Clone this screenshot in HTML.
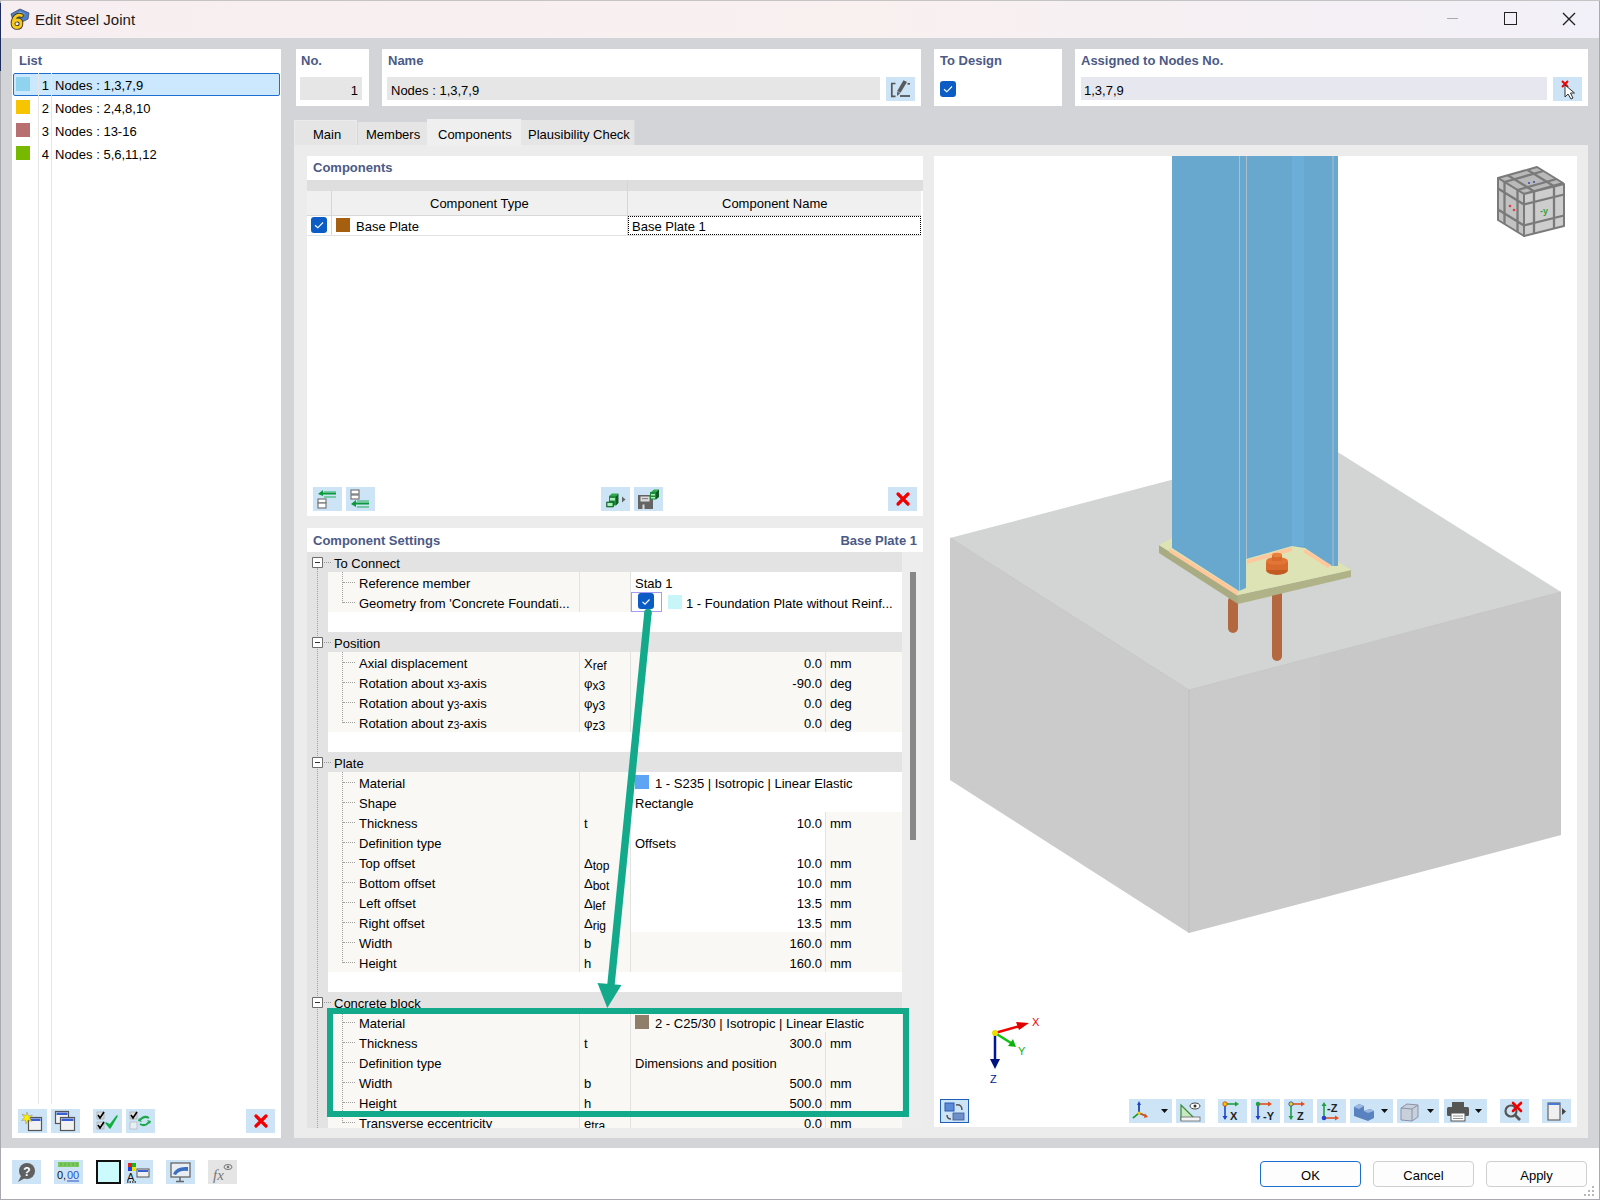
<!DOCTYPE html><html><head><meta charset="utf-8"><style>
html,body{margin:0;padding:0;width:1600px;height:1200px;overflow:hidden;background:#d3d4d8;}
body{position:relative;font-family:"Liberation Sans",sans-serif;font-size:13px;color:#000;}
div{box-sizing:border-box;}
.t{position:absolute;white-space:nowrap;margin-top:1px;}
.lbl{color:#4b5a86;font-weight:bold;}
.ib{position:absolute;background:#cde4f7;}
</style></head><body>
<div style="position:absolute;left:0px;top:0px;width:1600px;height:38px;background:linear-gradient(90deg,#f7eef1,#f9f0f0 55%,#f2f0f8);"></div>
<div class="t" style="left:35px;top:9px;height:20px;line-height:20px;font-size:15px;color:#1a1a1a;">Edit Steel Joint</div>
<div style="position:absolute;left:0px;top:1148px;width:1600px;height:52px;background:#fff;"></div>
<div style="position:absolute;left:12px;top:49px;width:269px;height:1089px;background:#fff;"></div>
<div class="t lbl" style="left:19px;top:50px;height:20px;line-height:20px;font-size:13px;">List</div>
<div style="position:absolute;left:13px;top:73px;width:267px;height:23px;background:#cce8ff;border:1px solid #1f6fd0;border-radius:2px;"></div>
<div style="position:absolute;left:38px;top:73px;width:1px;height:1031px;background:#e6e6e6;"></div>
<div style="position:absolute;left:51px;top:73px;width:1px;height:1031px;background:#e6e6e6;"></div>
<div style="position:absolute;left:16px;top:77px;width:14px;height:14px;background:#8fd3ee;"></div>
<div class="t" style="right:1551px;top:74px;height:22px;line-height:22px;text-align:right;">1</div>
<div class="t" style="left:55px;top:74px;height:22px;line-height:22px;">Nodes : 1,3,7,9</div>
<div style="position:absolute;left:16px;top:100px;width:14px;height:14px;background:#f6c400;"></div>
<div class="t" style="right:1551px;top:97px;height:22px;line-height:22px;text-align:right;">2</div>
<div class="t" style="left:55px;top:97px;height:22px;line-height:22px;">Nodes : 2,4,8,10</div>
<div style="position:absolute;left:16px;top:123px;width:14px;height:14px;background:#b86f70;"></div>
<div class="t" style="right:1551px;top:120px;height:22px;line-height:22px;text-align:right;">3</div>
<div class="t" style="left:55px;top:120px;height:22px;line-height:22px;">Nodes : 13-16</div>
<div style="position:absolute;left:16px;top:146px;width:14px;height:14px;background:#76b900;"></div>
<div class="t" style="right:1551px;top:143px;height:22px;line-height:22px;text-align:right;">4</div>
<div class="t" style="left:55px;top:143px;height:22px;line-height:22px;">Nodes : 5,6,11,12</div>
<div style="position:absolute;left:296px;top:49px;width:73px;height:57px;background:#fff;"></div>
<div class="t lbl" style="left:301px;top:50px;height:20px;line-height:20px;">No.</div>
<div style="position:absolute;left:300px;top:77px;width:62px;height:23px;background:#e6e6e6;"></div>
<div class="t" style="right:1242px;top:79px;height:22px;line-height:22px;text-align:right;">1</div>
<div style="position:absolute;left:382px;top:49px;width:539px;height:57px;background:#fff;"></div>
<div class="t lbl" style="left:388px;top:50px;height:20px;line-height:20px;">Name</div>
<div style="position:absolute;left:387px;top:77px;width:493px;height:23px;background:#e6e6e6;"></div>
<div class="t" style="left:391px;top:79px;height:22px;line-height:22px;">Nodes : 1,3,7,9</div>
<div style="position:absolute;left:886px;top:77px;width:29px;height:24px;background:#cde4f7;"></div>
<div style="position:absolute;left:934px;top:49px;width:128px;height:57px;background:#fff;"></div>
<div class="t lbl" style="left:940px;top:50px;height:20px;line-height:20px;">To Design</div>
<div style="position:absolute;left:1075px;top:49px;width:513px;height:57px;background:#fff;"></div>
<div class="t lbl" style="left:1081px;top:50px;height:20px;line-height:20px;">Assigned to Nodes No.</div>
<div style="position:absolute;left:1081px;top:77px;width:466px;height:23px;background:#e6e7ef;"></div>
<div class="t" style="left:1084px;top:79px;height:22px;line-height:22px;">1,3,7,9</div>
<div style="position:absolute;left:1553px;top:77px;width:29px;height:24px;background:#cde4f7;"></div>
<div style="position:absolute;left:294px;top:145px;width:1294px;height:993px;background:#ececec;"></div>
<div style="position:absolute;left:294px;top:120px;width:63px;height:25px;background:#e5e5e5;border:1px solid #ebebeb;border-bottom:none;"></div>
<div style="position:absolute;left:357px;top:122px;width:1px;height:23px;background:#d6d6d6;"></div>
<div style="position:absolute;left:358px;top:122px;width:69px;height:23px;background:#e5e5e5;"></div>
<div style="position:absolute;left:427px;top:119px;width:94px;height:27px;background:#efefef;"></div>
<div style="position:absolute;left:521px;top:120px;width:114px;height:25px;background:#e5e5e5;"></div>
<div style="position:absolute;left:634px;top:120px;width:1px;height:25px;background:#dadada;"></div>
<div class="t" style="left:313px;top:123px;height:22px;line-height:22px;">Main</div>
<div class="t" style="left:366px;top:123px;height:22px;line-height:22px;">Members</div>
<div class="t" style="left:438px;top:123px;height:22px;line-height:22px;">Components</div>
<div class="t" style="left:528px;top:123px;height:22px;line-height:22px;">Plausibility Check</div>
<div style="position:absolute;left:307px;top:156px;width:616px;height:360px;background:#fff;"></div>
<div class="t lbl" style="left:313px;top:157px;height:20px;line-height:20px;">Components</div>
<div style="position:absolute;left:307px;top:180px;width:616px;height:11px;background:#dedede;"></div>
<div style="position:absolute;left:307px;top:191px;width:614px;height:24px;background:#f0f0f0;"></div>
<div style="position:absolute;left:331px;top:191px;width:1px;height:44px;background:#d6d6d6;"></div>
<div style="position:absolute;left:627px;top:180px;width:1px;height:55px;background:#d6d6d6;"></div>
<div class="t" style="left:430px;top:193px;height:20px;line-height:20px;">Component Type</div>
<div class="t" style="left:722px;top:193px;height:20px;line-height:20px;">Component Name</div>
<div style="position:absolute;left:307px;top:215px;width:614px;height:1px;background:#d9d9d9;"></div>
<div style="position:absolute;left:307px;top:235px;width:614px;height:1px;background:#e3e3e3;"></div>
<div class="t" style="left:356px;top:216px;height:20px;line-height:20px;">Base Plate</div>
<div style="position:absolute;left:336px;top:218px;width:14px;height:14px;background:#a65e0f;"></div>
<div style="position:absolute;left:628px;top:216px;width:293px;height:19px;border:1px dotted #000;"></div>
<div class="t" style="left:632px;top:216px;height:20px;line-height:20px;">Base Plate 1</div>
<div style="position:absolute;left:313px;top:487px;width:29px;height:24px;background:#cde4f7;"></div>
<div style="position:absolute;left:346px;top:487px;width:29px;height:24px;background:#cde4f7;"></div>
<div style="position:absolute;left:601px;top:487px;width:29px;height:24px;background:#cde4f7;"></div>
<div style="position:absolute;left:634px;top:487px;width:29px;height:24px;background:#cde4f7;"></div>
<div style="position:absolute;left:888px;top:487px;width:29px;height:24px;background:#cde4f7;"></div>
<div style="position:absolute;left:307px;top:528px;width:616px;height:600px;background:#fff;"></div>
<div class="t lbl" style="left:313px;top:530px;height:20px;line-height:20px;">Component Settings</div>
<div class="t lbl" style="right:683px;top:530px;height:20px;line-height:20px;">Base Plate 1</div>
<div style="position:absolute;left:307px;top:552px;width:595px;height:576px;overflow:hidden;">
<div style="position:absolute;left:0px;top:0px;width:21px;height:576px;background:#e3e3e3"></div>
<div style="position:absolute;left:0px;top:0px;width:595px;height:20px;background:#e3e3e3"></div>
<div style="position:absolute;left:5px;top:5px;width:11px;height:11px;border:1px solid #6d6d6d;background:#fff;border-radius:1px;"></div>
<div style="position:absolute;left:8px;top:10px;width:5px;height:1px;background:#333;"></div>
<div style="position:absolute;left:17px;top:10px;width:7px;height:1px;border-top:1px dotted #9a9a9a;"></div>
<div class="t" style="left:27px;top:1px;height:20px;line-height:20px;">To Connect</div>
<div style="position:absolute;left:21px;top:20px;width:574px;height:20px;background:#f9f8f4"></div>
<div style="position:absolute;left:324px;top:20px;width:271px;height:20px;background:#fff;"></div>
<div style="position:absolute;left:21px;top:40px;width:574px;height:20px;background:#f9f8f4"></div>
<div style="position:absolute;left:324px;top:40px;width:271px;height:20px;background:#fff;"></div>
<div style="position:absolute;left:35px;top:20px;width:1px;height:31px;border-left:1px dotted #a0a0a0;"></div>
<div style="position:absolute;left:272px;top:20px;width:1px;height:20px;background:#e2e2e0;"></div>
<div style="position:absolute;left:323px;top:20px;width:1px;height:20px;background:#e2e2e0;"></div>
<div style="position:absolute;left:36px;top:30px;width:12px;height:1px;border-top:1px dotted #a0a0a0;"></div>
<div class="t" style="left:52px;top:21px;height:20px;line-height:20px;">Reference member</div>
<div class="t" style="left:328px;top:21px;height:20px;line-height:20px;">Stab 1</div>
<div style="position:absolute;left:272px;top:40px;width:1px;height:20px;background:#e2e2e0;"></div>
<div style="position:absolute;left:323px;top:40px;width:1px;height:20px;background:#e2e2e0;"></div>
<div style="position:absolute;left:36px;top:50px;width:12px;height:1px;border-top:1px dotted #a0a0a0;"></div>
<div class="t" style="left:52px;top:41px;height:20px;line-height:20px;">Geometry from 'Concrete Foundati...</div>
<div style="position:absolute;left:324px;top:40px;width:31px;height:20px;border:1px solid #a49cf0;background:#fff;"></div>
<div style="position:absolute;left:331px;top:41px;width:16px;height:16px;background:#0b5cc4;border-radius:3px;"></div>
<svg style="position:absolute;left:334px;top:46px" width="10" height="8" viewBox="0 0 10 8"><path d="M1.5 3.8 L4 6.2 L8.5 1.5" stroke="#fff" stroke-width="1.15" fill="none"/></svg>
<div style="position:absolute;left:361px;top:43px;width:14px;height:14px;background:#c8f6f8;"></div>
<div class="t" style="left:379px;top:41px;height:20px;line-height:20px;">1 - Foundation Plate without Reinf...</div>
<div style="position:absolute;left:21px;top:60px;width:574px;height:20px;background:#fff;"></div>
<div style="position:absolute;left:0px;top:80px;width:595px;height:20px;background:#e3e3e3"></div>
<div style="position:absolute;left:5px;top:85px;width:11px;height:11px;border:1px solid #6d6d6d;background:#fff;border-radius:1px;"></div>
<div style="position:absolute;left:8px;top:90px;width:5px;height:1px;background:#333;"></div>
<div style="position:absolute;left:17px;top:90px;width:7px;height:1px;border-top:1px dotted #9a9a9a;"></div>
<div class="t" style="left:27px;top:81px;height:20px;line-height:20px;">Position</div>
<div style="position:absolute;left:21px;top:100px;width:574px;height:20px;background:#f9f8f4"></div>
<div style="position:absolute;left:21px;top:120px;width:574px;height:20px;background:#f9f8f4"></div>
<div style="position:absolute;left:21px;top:140px;width:574px;height:20px;background:#f9f8f4"></div>
<div style="position:absolute;left:21px;top:160px;width:574px;height:20px;background:#f9f8f4"></div>
<div style="position:absolute;left:35px;top:100px;width:1px;height:71px;border-left:1px dotted #a0a0a0;"></div>
<div style="position:absolute;left:272px;top:100px;width:1px;height:20px;background:#e2e2e0;"></div>
<div style="position:absolute;left:323px;top:100px;width:1px;height:20px;background:#e2e2e0;"></div>
<div style="position:absolute;left:518px;top:100px;width:1px;height:20px;background:#e2e2e0;"></div>
<div style="position:absolute;left:36px;top:110px;width:12px;height:1px;border-top:1px dotted #a0a0a0;"></div>
<div class="t" style="left:52px;top:101px;height:20px;line-height:20px;">Axial displacement</div>
<div class="t" style="left:277px;top:101px;height:20px;line-height:20px;">X<span style="font-size:12px;position:relative;top:2px;">ref</span></div>
<div class="t" style="right:80px;top:101px;height:20px;line-height:20px;text-align:right;">0.0</div>
<div class="t" style="left:523px;top:101px;height:20px;line-height:20px;">mm</div>
<div style="position:absolute;left:272px;top:120px;width:1px;height:20px;background:#e2e2e0;"></div>
<div style="position:absolute;left:323px;top:120px;width:1px;height:20px;background:#e2e2e0;"></div>
<div style="position:absolute;left:518px;top:120px;width:1px;height:20px;background:#e2e2e0;"></div>
<div style="position:absolute;left:36px;top:130px;width:12px;height:1px;border-top:1px dotted #a0a0a0;"></div>
<div class="t" style="left:52px;top:121px;height:20px;line-height:20px;">Rotation about x<span style="font-size:10px;position:relative;top:1px;">3</span>-axis</div>
<div class="t" style="left:277px;top:121px;height:20px;line-height:20px;">φ<span style="font-size:12px;position:relative;top:2px;">x3</span></div>
<div class="t" style="right:80px;top:121px;height:20px;line-height:20px;text-align:right;">-90.0</div>
<div class="t" style="left:523px;top:121px;height:20px;line-height:20px;">deg</div>
<div style="position:absolute;left:272px;top:140px;width:1px;height:20px;background:#e2e2e0;"></div>
<div style="position:absolute;left:323px;top:140px;width:1px;height:20px;background:#e2e2e0;"></div>
<div style="position:absolute;left:518px;top:140px;width:1px;height:20px;background:#e2e2e0;"></div>
<div style="position:absolute;left:36px;top:150px;width:12px;height:1px;border-top:1px dotted #a0a0a0;"></div>
<div class="t" style="left:52px;top:141px;height:20px;line-height:20px;">Rotation about y<span style="font-size:10px;position:relative;top:1px;">3</span>-axis</div>
<div class="t" style="left:277px;top:141px;height:20px;line-height:20px;">φ<span style="font-size:12px;position:relative;top:2px;">y3</span></div>
<div class="t" style="right:80px;top:141px;height:20px;line-height:20px;text-align:right;">0.0</div>
<div class="t" style="left:523px;top:141px;height:20px;line-height:20px;">deg</div>
<div style="position:absolute;left:272px;top:160px;width:1px;height:20px;background:#e2e2e0;"></div>
<div style="position:absolute;left:323px;top:160px;width:1px;height:20px;background:#e2e2e0;"></div>
<div style="position:absolute;left:518px;top:160px;width:1px;height:20px;background:#e2e2e0;"></div>
<div style="position:absolute;left:36px;top:170px;width:12px;height:1px;border-top:1px dotted #a0a0a0;"></div>
<div class="t" style="left:52px;top:161px;height:20px;line-height:20px;">Rotation about z<span style="font-size:10px;position:relative;top:1px;">3</span>-axis</div>
<div class="t" style="left:277px;top:161px;height:20px;line-height:20px;">φ<span style="font-size:12px;position:relative;top:2px;">z3</span></div>
<div class="t" style="right:80px;top:161px;height:20px;line-height:20px;text-align:right;">0.0</div>
<div class="t" style="left:523px;top:161px;height:20px;line-height:20px;">deg</div>
<div style="position:absolute;left:21px;top:180px;width:574px;height:20px;background:#fff;"></div>
<div style="position:absolute;left:0px;top:200px;width:595px;height:20px;background:#e3e3e3"></div>
<div style="position:absolute;left:5px;top:205px;width:11px;height:11px;border:1px solid #6d6d6d;background:#fff;border-radius:1px;"></div>
<div style="position:absolute;left:8px;top:210px;width:5px;height:1px;background:#333;"></div>
<div style="position:absolute;left:17px;top:210px;width:7px;height:1px;border-top:1px dotted #9a9a9a;"></div>
<div class="t" style="left:27px;top:201px;height:20px;line-height:20px;">Plate</div>
<div style="position:absolute;left:21px;top:220px;width:574px;height:20px;background:#f9f8f4"></div>
<div style="position:absolute;left:324px;top:220px;width:271px;height:20px;background:#fff;"></div>
<div style="position:absolute;left:21px;top:240px;width:574px;height:20px;background:#f9f8f4"></div>
<div style="position:absolute;left:324px;top:240px;width:271px;height:20px;background:#fff;"></div>
<div style="position:absolute;left:21px;top:260px;width:574px;height:20px;background:#f9f8f4"></div>
<div style="position:absolute;left:324px;top:260px;width:195px;height:20px;background:#fff;"></div>
<div style="position:absolute;left:21px;top:280px;width:574px;height:20px;background:#f9f8f4"></div>
<div style="position:absolute;left:324px;top:280px;width:195px;height:20px;background:#fff;"></div>
<div style="position:absolute;left:21px;top:300px;width:574px;height:20px;background:#f9f8f4"></div>
<div style="position:absolute;left:324px;top:300px;width:195px;height:20px;background:#fff;"></div>
<div style="position:absolute;left:21px;top:320px;width:574px;height:20px;background:#f9f8f4"></div>
<div style="position:absolute;left:324px;top:320px;width:195px;height:20px;background:#fff;"></div>
<div style="position:absolute;left:21px;top:340px;width:574px;height:20px;background:#f9f8f4"></div>
<div style="position:absolute;left:324px;top:340px;width:195px;height:20px;background:#fff;"></div>
<div style="position:absolute;left:21px;top:360px;width:574px;height:20px;background:#f9f8f4"></div>
<div style="position:absolute;left:324px;top:360px;width:195px;height:20px;background:#fff;"></div>
<div style="position:absolute;left:21px;top:380px;width:574px;height:20px;background:#f9f8f4"></div>
<div style="position:absolute;left:21px;top:400px;width:574px;height:20px;background:#f9f8f4"></div>
<div style="position:absolute;left:35px;top:220px;width:1px;height:191px;border-left:1px dotted #a0a0a0;"></div>
<div style="position:absolute;left:272px;top:220px;width:1px;height:20px;background:#e2e2e0;"></div>
<div style="position:absolute;left:323px;top:220px;width:1px;height:20px;background:#e2e2e0;"></div>
<div style="position:absolute;left:36px;top:230px;width:12px;height:1px;border-top:1px dotted #a0a0a0;"></div>
<div class="t" style="left:52px;top:221px;height:20px;line-height:20px;">Material</div>
<div style="position:absolute;left:328px;top:223px;width:14px;height:14px;background:#5ea4f5;"></div>
<div class="t" style="left:348px;top:221px;height:20px;line-height:20px;">1 - S235 | Isotropic | Linear Elastic</div>
<div style="position:absolute;left:272px;top:240px;width:1px;height:20px;background:#e2e2e0;"></div>
<div style="position:absolute;left:323px;top:240px;width:1px;height:20px;background:#e2e2e0;"></div>
<div style="position:absolute;left:36px;top:250px;width:12px;height:1px;border-top:1px dotted #a0a0a0;"></div>
<div class="t" style="left:52px;top:241px;height:20px;line-height:20px;">Shape</div>
<div class="t" style="left:328px;top:241px;height:20px;line-height:20px;">Rectangle</div>
<div style="position:absolute;left:272px;top:260px;width:1px;height:20px;background:#e2e2e0;"></div>
<div style="position:absolute;left:323px;top:260px;width:1px;height:20px;background:#e2e2e0;"></div>
<div style="position:absolute;left:518px;top:260px;width:1px;height:20px;background:#e2e2e0;"></div>
<div style="position:absolute;left:36px;top:270px;width:12px;height:1px;border-top:1px dotted #a0a0a0;"></div>
<div class="t" style="left:52px;top:261px;height:20px;line-height:20px;">Thickness</div>
<div class="t" style="left:277px;top:261px;height:20px;line-height:20px;">t</div>
<div class="t" style="right:80px;top:261px;height:20px;line-height:20px;text-align:right;">10.0</div>
<div class="t" style="left:523px;top:261px;height:20px;line-height:20px;">mm</div>
<div style="position:absolute;left:272px;top:280px;width:1px;height:20px;background:#e2e2e0;"></div>
<div style="position:absolute;left:323px;top:280px;width:1px;height:20px;background:#e2e2e0;"></div>
<div style="position:absolute;left:518px;top:280px;width:1px;height:20px;background:#e2e2e0;"></div>
<div style="position:absolute;left:36px;top:290px;width:12px;height:1px;border-top:1px dotted #a0a0a0;"></div>
<div class="t" style="left:52px;top:281px;height:20px;line-height:20px;">Definition type</div>
<div class="t" style="left:328px;top:281px;height:20px;line-height:20px;">Offsets</div>
<div style="position:absolute;left:272px;top:300px;width:1px;height:20px;background:#e2e2e0;"></div>
<div style="position:absolute;left:323px;top:300px;width:1px;height:20px;background:#e2e2e0;"></div>
<div style="position:absolute;left:518px;top:300px;width:1px;height:20px;background:#e2e2e0;"></div>
<div style="position:absolute;left:36px;top:310px;width:12px;height:1px;border-top:1px dotted #a0a0a0;"></div>
<div class="t" style="left:52px;top:301px;height:20px;line-height:20px;">Top offset</div>
<div class="t" style="left:277px;top:301px;height:20px;line-height:20px;">Δ<span style="font-size:12px;position:relative;top:2px;">top</span></div>
<div class="t" style="right:80px;top:301px;height:20px;line-height:20px;text-align:right;">10.0</div>
<div class="t" style="left:523px;top:301px;height:20px;line-height:20px;">mm</div>
<div style="position:absolute;left:272px;top:320px;width:1px;height:20px;background:#e2e2e0;"></div>
<div style="position:absolute;left:323px;top:320px;width:1px;height:20px;background:#e2e2e0;"></div>
<div style="position:absolute;left:518px;top:320px;width:1px;height:20px;background:#e2e2e0;"></div>
<div style="position:absolute;left:36px;top:330px;width:12px;height:1px;border-top:1px dotted #a0a0a0;"></div>
<div class="t" style="left:52px;top:321px;height:20px;line-height:20px;">Bottom offset</div>
<div class="t" style="left:277px;top:321px;height:20px;line-height:20px;">Δ<span style="font-size:12px;position:relative;top:2px;">bot</span></div>
<div class="t" style="right:80px;top:321px;height:20px;line-height:20px;text-align:right;">10.0</div>
<div class="t" style="left:523px;top:321px;height:20px;line-height:20px;">mm</div>
<div style="position:absolute;left:272px;top:340px;width:1px;height:20px;background:#e2e2e0;"></div>
<div style="position:absolute;left:323px;top:340px;width:1px;height:20px;background:#e2e2e0;"></div>
<div style="position:absolute;left:518px;top:340px;width:1px;height:20px;background:#e2e2e0;"></div>
<div style="position:absolute;left:36px;top:350px;width:12px;height:1px;border-top:1px dotted #a0a0a0;"></div>
<div class="t" style="left:52px;top:341px;height:20px;line-height:20px;">Left offset</div>
<div class="t" style="left:277px;top:341px;height:20px;line-height:20px;">Δ<span style="font-size:12px;position:relative;top:2px;">lef</span></div>
<div class="t" style="right:80px;top:341px;height:20px;line-height:20px;text-align:right;">13.5</div>
<div class="t" style="left:523px;top:341px;height:20px;line-height:20px;">mm</div>
<div style="position:absolute;left:272px;top:360px;width:1px;height:20px;background:#e2e2e0;"></div>
<div style="position:absolute;left:323px;top:360px;width:1px;height:20px;background:#e2e2e0;"></div>
<div style="position:absolute;left:518px;top:360px;width:1px;height:20px;background:#e2e2e0;"></div>
<div style="position:absolute;left:36px;top:370px;width:12px;height:1px;border-top:1px dotted #a0a0a0;"></div>
<div class="t" style="left:52px;top:361px;height:20px;line-height:20px;">Right offset</div>
<div class="t" style="left:277px;top:361px;height:20px;line-height:20px;">Δ<span style="font-size:12px;position:relative;top:2px;">rig</span></div>
<div class="t" style="right:80px;top:361px;height:20px;line-height:20px;text-align:right;">13.5</div>
<div class="t" style="left:523px;top:361px;height:20px;line-height:20px;">mm</div>
<div style="position:absolute;left:272px;top:380px;width:1px;height:20px;background:#e2e2e0;"></div>
<div style="position:absolute;left:323px;top:380px;width:1px;height:20px;background:#e2e2e0;"></div>
<div style="position:absolute;left:518px;top:380px;width:1px;height:20px;background:#e2e2e0;"></div>
<div style="position:absolute;left:36px;top:390px;width:12px;height:1px;border-top:1px dotted #a0a0a0;"></div>
<div class="t" style="left:52px;top:381px;height:20px;line-height:20px;">Width</div>
<div class="t" style="left:277px;top:381px;height:20px;line-height:20px;">b</div>
<div class="t" style="right:80px;top:381px;height:20px;line-height:20px;text-align:right;">160.0</div>
<div class="t" style="left:523px;top:381px;height:20px;line-height:20px;">mm</div>
<div style="position:absolute;left:272px;top:400px;width:1px;height:20px;background:#e2e2e0;"></div>
<div style="position:absolute;left:323px;top:400px;width:1px;height:20px;background:#e2e2e0;"></div>
<div style="position:absolute;left:518px;top:400px;width:1px;height:20px;background:#e2e2e0;"></div>
<div style="position:absolute;left:36px;top:410px;width:12px;height:1px;border-top:1px dotted #a0a0a0;"></div>
<div class="t" style="left:52px;top:401px;height:20px;line-height:20px;">Height</div>
<div class="t" style="left:277px;top:401px;height:20px;line-height:20px;">h</div>
<div class="t" style="right:80px;top:401px;height:20px;line-height:20px;text-align:right;">160.0</div>
<div class="t" style="left:523px;top:401px;height:20px;line-height:20px;">mm</div>
<div style="position:absolute;left:21px;top:420px;width:574px;height:20px;background:#fff;"></div>
<div style="position:absolute;left:0px;top:440px;width:595px;height:20px;background:#e3e3e3"></div>
<div style="position:absolute;left:5px;top:445px;width:11px;height:11px;border:1px solid #6d6d6d;background:#fff;border-radius:1px;"></div>
<div style="position:absolute;left:8px;top:450px;width:5px;height:1px;background:#333;"></div>
<div style="position:absolute;left:17px;top:450px;width:7px;height:1px;border-top:1px dotted #9a9a9a;"></div>
<div class="t" style="left:27px;top:441px;height:20px;line-height:20px;">Concrete block</div>
<div style="position:absolute;left:21px;top:460px;width:574px;height:20px;background:#f9f8f4"></div>
<div style="position:absolute;left:21px;top:480px;width:574px;height:20px;background:#f9f8f4"></div>
<div style="position:absolute;left:21px;top:500px;width:574px;height:20px;background:#f9f8f4"></div>
<div style="position:absolute;left:21px;top:520px;width:574px;height:20px;background:#f9f8f4"></div>
<div style="position:absolute;left:21px;top:540px;width:574px;height:20px;background:#f9f8f4"></div>
<div style="position:absolute;left:21px;top:560px;width:574px;height:20px;background:#f9f8f4"></div>
<div style="position:absolute;left:35px;top:460px;width:1px;height:111px;border-left:1px dotted #a0a0a0;"></div>
<div style="position:absolute;left:272px;top:460px;width:1px;height:20px;background:#e2e2e0;"></div>
<div style="position:absolute;left:323px;top:460px;width:1px;height:20px;background:#e2e2e0;"></div>
<div style="position:absolute;left:36px;top:470px;width:12px;height:1px;border-top:1px dotted #a0a0a0;"></div>
<div class="t" style="left:52px;top:461px;height:20px;line-height:20px;">Material</div>
<div style="position:absolute;left:328px;top:463px;width:14px;height:14px;background:#8f7f6a;"></div>
<div class="t" style="left:348px;top:461px;height:20px;line-height:20px;">2 - C25/30 | Isotropic | Linear Elastic</div>
<div style="position:absolute;left:272px;top:480px;width:1px;height:20px;background:#e2e2e0;"></div>
<div style="position:absolute;left:323px;top:480px;width:1px;height:20px;background:#e2e2e0;"></div>
<div style="position:absolute;left:518px;top:480px;width:1px;height:20px;background:#e2e2e0;"></div>
<div style="position:absolute;left:36px;top:490px;width:12px;height:1px;border-top:1px dotted #a0a0a0;"></div>
<div class="t" style="left:52px;top:481px;height:20px;line-height:20px;">Thickness</div>
<div class="t" style="left:277px;top:481px;height:20px;line-height:20px;">t</div>
<div class="t" style="right:80px;top:481px;height:20px;line-height:20px;text-align:right;">300.0</div>
<div class="t" style="left:523px;top:481px;height:20px;line-height:20px;">mm</div>
<div style="position:absolute;left:272px;top:500px;width:1px;height:20px;background:#e2e2e0;"></div>
<div style="position:absolute;left:323px;top:500px;width:1px;height:20px;background:#e2e2e0;"></div>
<div style="position:absolute;left:518px;top:500px;width:1px;height:20px;background:#e2e2e0;"></div>
<div style="position:absolute;left:36px;top:510px;width:12px;height:1px;border-top:1px dotted #a0a0a0;"></div>
<div class="t" style="left:52px;top:501px;height:20px;line-height:20px;">Definition type</div>
<div class="t" style="left:328px;top:501px;height:20px;line-height:20px;">Dimensions and position</div>
<div style="position:absolute;left:272px;top:520px;width:1px;height:20px;background:#e2e2e0;"></div>
<div style="position:absolute;left:323px;top:520px;width:1px;height:20px;background:#e2e2e0;"></div>
<div style="position:absolute;left:518px;top:520px;width:1px;height:20px;background:#e2e2e0;"></div>
<div style="position:absolute;left:36px;top:530px;width:12px;height:1px;border-top:1px dotted #a0a0a0;"></div>
<div class="t" style="left:52px;top:521px;height:20px;line-height:20px;">Width</div>
<div class="t" style="left:277px;top:521px;height:20px;line-height:20px;">b</div>
<div class="t" style="right:80px;top:521px;height:20px;line-height:20px;text-align:right;">500.0</div>
<div class="t" style="left:523px;top:521px;height:20px;line-height:20px;">mm</div>
<div style="position:absolute;left:272px;top:540px;width:1px;height:20px;background:#e2e2e0;"></div>
<div style="position:absolute;left:323px;top:540px;width:1px;height:20px;background:#e2e2e0;"></div>
<div style="position:absolute;left:518px;top:540px;width:1px;height:20px;background:#e2e2e0;"></div>
<div style="position:absolute;left:36px;top:550px;width:12px;height:1px;border-top:1px dotted #a0a0a0;"></div>
<div class="t" style="left:52px;top:541px;height:20px;line-height:20px;">Height</div>
<div class="t" style="left:277px;top:541px;height:20px;line-height:20px;">h</div>
<div class="t" style="right:80px;top:541px;height:20px;line-height:20px;text-align:right;">500.0</div>
<div class="t" style="left:523px;top:541px;height:20px;line-height:20px;">mm</div>
<div style="position:absolute;left:272px;top:560px;width:1px;height:20px;background:#e2e2e0;"></div>
<div style="position:absolute;left:323px;top:560px;width:1px;height:20px;background:#e2e2e0;"></div>
<div style="position:absolute;left:518px;top:560px;width:1px;height:20px;background:#e2e2e0;"></div>
<div style="position:absolute;left:36px;top:570px;width:12px;height:1px;border-top:1px dotted #a0a0a0;"></div>
<div class="t" style="left:52px;top:561px;height:20px;line-height:20px;">Transverse eccentricity</div>
<div class="t" style="left:277px;top:561px;height:20px;line-height:20px;">e<span style="font-size:12px;position:relative;top:2px;">tra</span></div>
<div class="t" style="right:80px;top:561px;height:20px;line-height:20px;text-align:right;">0.0</div>
<div class="t" style="left:523px;top:561px;height:20px;line-height:20px;">mm</div>
<div style="position:absolute;left:21px;top:580px;width:574px;height:20px;background:#fff;"></div>
<div style="position:absolute;left:10px;top:16px;width:1px;height:560px;border-left:1px dotted #a0a0a0;"></div>
<div style="position:absolute;left:5px;top:5px;width:11px;height:11px;border:1px solid #6d6d6d;background:#fff;border-radius:1px;"></div>
<div style="position:absolute;left:8px;top:10px;width:5px;height:1px;background:#333;"></div>
<div style="position:absolute;left:5px;top:85px;width:11px;height:11px;border:1px solid #6d6d6d;background:#fff;border-radius:1px;"></div>
<div style="position:absolute;left:8px;top:90px;width:5px;height:1px;background:#333;"></div>
<div style="position:absolute;left:5px;top:205px;width:11px;height:11px;border:1px solid #6d6d6d;background:#fff;border-radius:1px;"></div>
<div style="position:absolute;left:8px;top:210px;width:5px;height:1px;background:#333;"></div>
<div style="position:absolute;left:5px;top:445px;width:11px;height:11px;border:1px solid #6d6d6d;background:#fff;border-radius:1px;"></div>
<div style="position:absolute;left:8px;top:450px;width:5px;height:1px;background:#333;"></div>
</div>
<div style="position:absolute;left:902px;top:552px;width:21px;height:576px;background:#ededed;"></div>
<div style="position:absolute;left:910px;top:572px;width:6px;height:268px;background:#878787;"></div>
<svg style="position:absolute;left:0;top:0" width="1600" height="1200"><g fill="#13aa8c" stroke="none"><path d="M644.3 612 L651.7 612.8 L614.4 988 L607 987.2 Z"/><circle cx="648" cy="612.5" r="3.7"/><path d="M597.5 983 L621.5 985 L607.3 1008 Z"/></g><rect x="330" y="1011" width="576" height="103" fill="none" stroke="#13aa8c" stroke-width="6"/></svg>
<div style="position:absolute;left:934px;top:156px;width:643px;height:971px;background:#fff;"></div>
<svg style="position:absolute;left:0;top:0" width="1600" height="1200"><defs><clipPath id="vp"><rect x="934" y="156" width="643" height="971"/></clipPath></defs><g clip-path="url(#vp)"><polygon points="950,538 1320,441 1561,592 1189,690" fill="#d3d4d4"/><polygon points="950,538 1189,690 1189,933 950,780" fill="#cbcbcb"/><polygon points="1189,690 1561,592 1561,835 1189,933" fill="#c9cac9"/><polygon points="1320,441 1561,592 1320,656" fill="#d5d6d6" opacity="0.35"/><polygon points="1320,656 1561,592 1561,835 1320,898" fill="#c6c7c6" opacity="0.35"/><polyline points="950,538 1189,690 1561,592" fill="none" stroke="#c2c2c2" stroke-width="0.8"/><line x1="1189" y1="690" x2="1189" y2="933" stroke="#bdbdbd" stroke-width="0.8"/><rect x="1228" y="596" width="10" height="37" rx="5" fill="#b4683f"/><rect x="1272" y="588" width="10" height="73" rx="5" fill="#b4683f"/><polygon points="1159,545 1238,595 1238,604 1159,553" fill="#a9ac82"/><polygon points="1238,595 1351,570 1351,577 1238,604" fill="#b0b388"/><polygon points="1159,545 1238,595 1351,570 1290,532 1172,538" fill="#dee3b5"/><polygon points="1172,156 1338,156 1338,566 1332,566 1305,548 1292,546 1246,559 1246,588 1239,591 1172,548" fill="#68a8cf"/><rect x="1292" y="156" width="12" height="390" fill="#6bafd9"/><line x1="1239.5" y1="156" x2="1239.5" y2="591" stroke="#b3c2cc" stroke-width="0.9"/><line x1="1246.5" y1="156" x2="1246.5" y2="559" stroke="#b3c2cc" stroke-width="0.9"/><line x1="1333" y1="156" x2="1333" y2="566" stroke="#b3c2cc" stroke-width="0.9"/><polygon points="1169,548 1238,591 1238,596 1169,552" fill="#ffc89c"/><polygon points="1247,560 1292,547 1292,551 1247,564" fill="#ffc89c"/><polygon points="1305,549 1331,565 1328,568 1303,552" fill="#ffc89c"/><ellipse cx="1277" cy="570" rx="11" ry="5" fill="#c25a22"/><polygon points="1266,562 1270,558 1284,558 1288,562 1288,570 1266,570" fill="#d96a2e"/><ellipse cx="1277" cy="561" rx="11" ry="4" fill="#e27535"/><rect x="1272" y="555" width="10" height="6" fill="#d9682c"/><ellipse cx="1277" cy="555" rx="5" ry="2.2" fill="#e8803e"/></g><polygon points="1498.0,178.0 1524.0,194.0 1563.0,183.0 1537.0,167.0" fill="#b9b9b9" stroke="#7a7a7a" stroke-width="2" stroke-linejoin="round"/><path d="M1504.5 182.0 L1543.5 171.0 M1507.8 175.2 L1533.8 191.2" stroke="#7a7a7a" stroke-width="2.3"/><path d="M1517.5 190.0 L1556.5 179.0 M1527.2 169.8 L1553.2 185.8" stroke="#7a7a7a" stroke-width="2.3"/><polygon points="1498.0,178.0 1524.0,194.0 1524.0,236.0 1498.0,220.0" fill="#c2c2c2" stroke="#7a7a7a" stroke-width="2" stroke-linejoin="round"/><path d="M1504.5 182.0 L1504.5 224.0 M1498.0 188.5 L1524.0 204.5" stroke="#7a7a7a" stroke-width="2.3"/><path d="M1517.5 190.0 L1517.5 232.0 M1498.0 209.5 L1524.0 225.5" stroke="#7a7a7a" stroke-width="2.3"/><polygon points="1524.0,194.0 1564.0,184.0 1564.0,226.0 1524.0,236.0" fill="#cdcdcd" stroke="#7a7a7a" stroke-width="2" stroke-linejoin="round"/><path d="M1534.0 191.5 L1534.0 233.5 M1524.0 204.5 L1564.0 194.5" stroke="#7a7a7a" stroke-width="2.3"/><path d="M1554.0 186.5 L1554.0 228.5 M1524.0 225.5 L1564.0 215.5" stroke="#7a7a7a" stroke-width="2.3"/><text x="1540" y="214" font-size="9" font-weight="bold" fill="#3aa040" font-family="Liberation Sans">-y</text><circle cx="1510" cy="206" r="1.3" fill="#e04040"/><circle cx="1514" cy="210" r="1.3" fill="#e04040"/><circle cx="1529" cy="183" r="1.1" fill="#4050b0"/><circle cx="1534" cy="182" r="1.1" fill="#4050b0"/><g><line x1="995" y1="1033" x2="1020" y2="1026" stroke="#f20000" stroke-width="2.5"/><polygon points="1016,1022 1029,1023 1019,1030" fill="#e00000"/><line x1="995" y1="1033" x2="1011" y2="1043" stroke="#10c010" stroke-width="2.5"/><polygon points="1008,1046 1016,1047 1013,1039" fill="#10b010"/><line x1="995" y1="1033" x2="995" y2="1060" stroke="#001890" stroke-width="2.5"/><polygon points="990,1059 1000,1059 995,1069" fill="#001480"/><circle cx="995" cy="1033" r="3" fill="#e8e000"/><text x="1032" y="1026" font-size="11" fill="#f00000" font-family="Liberation Sans">X</text><text x="1018" y="1055" font-size="11" fill="#10b010" font-family="Liberation Sans">Y</text><text x="990" y="1083" font-size="11" fill="#001890" font-family="Liberation Sans">Z</text></g></svg>
<div style="position:absolute;left:886px;top:77px;width:29px;height:24px;background:#cde4f7;"><svg width="29" height="24" viewBox="0 0 29 24" style="position:absolute;left:0;top:0"><path d="M9.5 6.5 H5.8 V19.3 H9.5" stroke="#555" stroke-width="1.7" fill="none"/><path d="M14 19 H24" stroke="#555" stroke-width="1.8"/><path d="M21.5 6.8 H24" stroke="#555" stroke-width="1.6"/><path d="M17.5 3.2 L21 5 L14.5 15.8 L11.2 14 Z" fill="#5a5a5a"/><path d="M11.2 14.5 L14.2 16.2 L11 19 Z" fill="#5a5a5a"/></svg></div>
<div style="position:absolute;left:940px;top:81px;width:16px;height:16px;background:#0b5cc4;border-radius:3px;"><svg width="16" height="16" style="position:absolute;left:0;top:0"><path d="M4 8.3 L6.8 10.8 L12 5.5" stroke="#fff" stroke-width="1.15" fill="none"/></svg></div>
<div style="position:absolute;left:1553px;top:77px;width:29px;height:24px;background:#cde4f7;"><svg width="29" height="24" viewBox="0 0 29 24" style="position:absolute;left:0;top:0"><path d="M9 4 L15 10 M15 4 L9 10" stroke="#f00000" stroke-width="2"/><path d="M12 8 L12 20 L15 17 L18 22 L20 21 L17.5 16 L21.5 16 Z" fill="#fff" stroke="#333" stroke-width="1"/></svg></div>
<div style="position:absolute;left:311px;top:217px;width:16px;height:16px;background:#0b5cc4;border-radius:3px;"><svg width="16" height="16" style="position:absolute;left:0;top:0"><path d="M4 8.3 L6.8 10.8 L12 5.5" stroke="#fff" stroke-width="1.15" fill="none"/></svg></div>
<div style="position:absolute;left:313px;top:487px;width:29px;height:24px;background:#cde4f7;"><svg width="29" height="24" viewBox="0 0 29 24" style="position:absolute;left:0;top:0"><path d="M5 7 L10 3 L10 5.5 H23 V7.5 H10 V9 Z" fill="#0a9a3a"/><path d="M11 5 H23 M11 10 H23" stroke="#5cc08a" stroke-width="1.5"/><rect x="5" y="12" width="8" height="4" fill="#fff" stroke="#777" stroke-width="1.2"/><rect x="5" y="16" width="8" height="5" fill="#fff" stroke="#777" stroke-width="1.2"/></svg></div>
<div style="position:absolute;left:346px;top:487px;width:29px;height:24px;background:#cde4f7;"><svg width="29" height="24" viewBox="0 0 29 24" style="position:absolute;left:0;top:0"><rect x="5" y="3" width="8" height="4" fill="#fff" stroke="#777" stroke-width="1.2"/><rect x="5" y="8" width="8" height="4" fill="#fff" stroke="#777" stroke-width="1.2"/><path d="M5 17 L10 13 L10 15.5 H23 V17.5 H10 V20 Z" fill="#0a9a3a"/><path d="M11 14 H23 M11 20 H23" stroke="#5cc08a" stroke-width="1.5"/></svg></div>
<div style="position:absolute;left:601px;top:487px;width:29px;height:24px;background:#cde4f7;"><svg width="29" height="24" viewBox="0 0 29 24" style="position:absolute;left:0;top:0"><path d="M8 9 L11 6.5 H17.5 L15 9 Z" fill="#2fa84c"/><path d="M15 9 L17.5 6.5 V16 L15 18.5 Z" fill="#0e5e24"/><path d="M8 9 H15 V18.5 H8 Z" fill="#1f8a3a"/><path d="M5.5 15 H12.5 V20 H5.5 Z" fill="#1f8a3a" stroke="#0d4d1f" stroke-width="0.6"/><path d="M9 11 h5 v2.5 h-5 z M6.5 16 h5 v3 h-5 z" fill="#a8f0b8"/><path d="M21 9.5 L24.5 12.5 L21 15.5 Z" fill="#666"/></svg></div>
<div style="position:absolute;left:634px;top:487px;width:29px;height:24px;background:#cde4f7;"><svg width="29" height="24" viewBox="0 0 29 24" style="position:absolute;left:0;top:0"><path d="M4 8 H16 L19 10.5 V22 H4 Z" fill="#646464"/><rect x="6.5" y="9.5" width="9" height="5" fill="#dcdcdc"/><rect x="8" y="11" width="6" height="1.2" fill="#888"/><rect x="8.5" y="17.5" width="2" height="4.5" fill="#dcdcdc"/><path d="M17 5 L20 2.5 H25 L22 5 Z" fill="#2fa84c"/><path d="M22 5 L25 2.5 V10 L22 12.5 Z" fill="#0e5e24"/><path d="M16 5 H22 V12.5 H16 Z" fill="#1f8a3a"/><path d="M17 7 h4 v1.6 h-4 z M17 10 h4 v1.6 h-4 z" fill="#a8f0b8"/></svg></div>
<div style="position:absolute;left:888px;top:487px;width:29px;height:24px;background:#cde4f7;"><svg width="29" height="24" viewBox="0 0 29 24" style="position:absolute;left:0;top:0"><path d="M10 7 L20 17 M20 7 L10 17" stroke="#f00000" stroke-width="3.2" stroke-linecap="round"/></svg></div>
<div style="position:absolute;left:18px;top:1109px;width:29px;height:24px;background:#cde4f7;"><svg width="29" height="24" viewBox="0 0 29 24" style="position:absolute;left:0;top:0"><rect x="10.5" y="8.5" width="13" height="13" fill="#f2f2f2" stroke="#555" stroke-width="1.2"/><rect x="11.5" y="9.5" width="11" height="2.5" fill="#3a5fd0"/><path d="M9 3 L10.5 7 L14.5 6 L11.5 9 L14 12.5 L10 11 L8 15 L7.5 11 L3.5 11.5 L6.5 8.5 L4 5 L8 6.5 Z" fill="#ffee00" stroke="#888" stroke-width="0.5"/></svg></div>
<div style="position:absolute;left:51px;top:1109px;width:29px;height:24px;background:#cde4f7;"><svg width="29" height="24" viewBox="0 0 29 24" style="position:absolute;left:0;top:0"><rect x="4.5" y="2.5" width="13" height="12" fill="#f2f2f2" stroke="#555" stroke-width="1.2"/><rect x="5.5" y="3.5" width="11" height="2.5" fill="#3a5fd0"/><rect x="9.5" y="8.5" width="14" height="13" fill="#f2f2f2" stroke="#555" stroke-width="1.2"/><rect x="10.5" y="9.5" width="12" height="2.5" fill="#3a5fd0"/></svg></div>
<div style="position:absolute;left:93px;top:1109px;width:29px;height:24px;background:#cde4f7;"><svg width="29" height="24" viewBox="0 0 29 24" style="position:absolute;left:0;top:0"><rect x="4" y="3" width="7" height="7" fill="#ddd" stroke="#999" stroke-width="0.6"/><rect x="4" y="13" width="7" height="7" fill="#ddd" stroke="#999" stroke-width="0.6"/><path d="M5 6 L7 9 L11 3 M5 16 L7 19 L11 13" stroke="#000" stroke-width="1.6" fill="none"/><path d="M13 14 L17 19 L24 7 L17 16 Z" fill="#10b040" stroke="#10b040" stroke-width="1.5" stroke-linejoin="round"/></svg></div>
<div style="position:absolute;left:126px;top:1109px;width:29px;height:24px;background:#cde4f7;"><svg width="29" height="24" viewBox="0 0 29 24" style="position:absolute;left:0;top:0"><rect x="4" y="3" width="7" height="7" fill="#ddd" stroke="#999" stroke-width="0.6"/><rect x="4" y="13" width="7" height="7" fill="#e6eef6" stroke="#aaa" stroke-width="0.6"/><path d="M5 6 L7 9 L11 3" stroke="#000" stroke-width="1.6" fill="none"/><path d="M14 11 Q18 6 23 9 M23 13 Q19 18 14 15" stroke="#1ca84a" stroke-width="2" fill="none"/><path d="M13 9 L16 13 L12 12 Z M24 15 L21 11 L25 12 Z" fill="#1ca84a"/></svg></div>
<div style="position:absolute;left:246px;top:1109px;width:29px;height:24px;background:#cde4f7;"><svg width="29" height="24" viewBox="0 0 29 24" style="position:absolute;left:0;top:0"><path d="M10 7 L20 17 M20 7 L10 17" stroke="#f00000" stroke-width="3.2" stroke-linecap="round"/></svg></div>
<div style="position:absolute;left:12px;top:1160px;width:29px;height:24px;background:#cde4f7;"><svg width="29" height="24" viewBox="0 0 29 24" style="position:absolute;left:0;top:0"><circle cx="15" cy="11" r="8" fill="#5f5f5f"/><path d="M9 16 L6 22 L13 18 Z" fill="#5f5f5f"/><text x="15" y="15.5" font-size="12" font-weight="bold" fill="#fff" text-anchor="middle" font-family="Liberation Sans">?</text></svg></div>
<div style="position:absolute;left:54px;top:1160px;width:29px;height:24px;background:#cde4f7;"><svg width="29" height="24" viewBox="0 0 29 24" style="position:absolute;left:0;top:0"><rect x="4" y="2" width="21" height="5" fill="#7cc860"/><path d="M7 3v3 M11 3v3 M15 3v3 M19 3v3 M23 3v3" stroke="#4a9a3a" stroke-width="0.6"/><text x="3" y="19" font-size="11" fill="#111" font-family="Liberation Sans">0,</text><text x="13" y="19" font-size="11" fill="#2a50d0" font-family="Liberation Sans">00</text><rect x="13" y="20.5" width="12" height="1" fill="#2a50d0"/></svg></div>
<div style="position:absolute;left:96px;top:1160px;width:25px;height:24px;background:#ccfbfd;border:2px solid #111;"></div>
<div style="position:absolute;left:124px;top:1160px;width:29px;height:24px;background:#cde4f7;"><svg width="29" height="24" viewBox="0 0 29 24" style="position:absolute;left:0;top:0"><rect x="4" y="3" width="4" height="4" fill="#e02020"/><rect x="8" y="3" width="4" height="4" fill="#20b020"/><rect x="4" y="7" width="4" height="4" fill="#2040e0"/><rect x="8" y="7" width="4" height="4" fill="#f0e000"/><text x="3" y="21" font-size="11" fill="#111" font-family="Liberation Sans">A</text><rect x="13" y="9" width="12" height="8" fill="#f0f0f0" stroke="#555" stroke-width="1"/><rect x="14" y="10" width="10" height="2" fill="#3a5fd0"/><path d="M3 22 H12" stroke="#333" stroke-width="1.5" stroke-dasharray="1.5 1"/></svg></div>
<div style="position:absolute;left:166px;top:1160px;width:29px;height:24px;background:#cde4f7;"><svg width="29" height="24" viewBox="0 0 29 24" style="position:absolute;left:0;top:0"><rect x="5" y="3" width="19" height="14" fill="#e8eef4" stroke="#666" stroke-width="1.3"/><path d="M7 14 Q10 6 22 7 L22 11 Q13 10 10 15 Z" fill="#3a6fc0"/><path d="M14 17 V21 M10 21.5 H18" stroke="#666" stroke-width="1.5"/></svg></div>
<div style="position:absolute;left:208px;top:1160px;width:29px;height:24px;background:#e5e5e5;"><svg width="29" height="24" viewBox="0 0 29 24" style="position:absolute;left:0;top:0"><text x="5" y="20" font-size="15" font-style="italic" fill="#777" font-family="Liberation Serif">fx</text><ellipse cx="20" cy="7" rx="4" ry="2.5" fill="none" stroke="#777" stroke-width="1"/><circle cx="20" cy="7" r="1.3" fill="#777"/></svg></div>
<div style="position:absolute;left:940px;top:1099px;width:29px;height:24px;background:#cde4f7;border:1px solid #1f5fb8;"><svg width="29" height="24" viewBox="0 0 29 24" style="position:absolute;left:0;top:0"><rect x="4" y="3" width="9" height="8" fill="#5a8ad8" stroke="#2a5ab0"/><path d="M15 5 Q21 4 21 10" stroke="#555" stroke-width="1.5" fill="none"/><path d="M6 15 Q6 19 10 19" stroke="#555" stroke-width="1.5" fill="none"/><rect x="12" y="13" width="11" height="7" fill="#6f8fc8" stroke="#3a5a98" stroke-width="0.8"/></svg></div>
<div style="position:absolute;left:1129px;top:1099px;width:43px;height:24px;background:#cde4f7;"><svg width="43" height="24" viewBox="0 0 43 24" style="position:absolute;left:0;top:0"><path d="M10 4 V14 L4 19 M10 14 L17 17" stroke="#2a8a2a" stroke-width="1.6" fill="none"/><path d="M10 4 V13" stroke="#2244cc" stroke-width="1.6"/><path d="M8 6 L10 2 L12 6 Z" fill="#2244cc"/><path d="M10 14 L17 17" stroke="#e05020" stroke-width="1.6"/><path d="M16 14.5 L19 18 L15 19 Z" fill="#e05020"/><path d="M10 14 L4 19" stroke="#20a040" stroke-width="1.6"/><circle cx="10" cy="14" r="1.5" fill="#f0d000"/><path d="M32 10 L39 10 L35.5 14 Z" fill="#111"/></svg></div>
<div style="position:absolute;left:1176px;top:1099px;width:29px;height:24px;background:#cde4f7;"><svg width="29" height="24" viewBox="0 0 29 24" style="position:absolute;left:0;top:0"><path d="M5 21 L5 6 L20 21 Z" fill="#c8e8c0" stroke="#3a8a3a" stroke-width="1.2"/><rect x="5" y="18" width="19" height="4" fill="#f4f4f4" stroke="#666" stroke-width="0.8"/><ellipse cx="19" cy="7" rx="5" ry="3" fill="#fff" stroke="#444" stroke-width="1"/><circle cx="19" cy="7" r="1.5" fill="#333"/></svg></div>
<div style="position:absolute;left:1218px;top:1099px;width:29px;height:24px;background:#cde4f7;"><svg width="29" height="24" viewBox="0 0 29 24" style="position:absolute;left:0;top:0"><path d="M7 7 V20" stroke="#2244cc" stroke-width="1.6"/><path d="M4.5 17 L7 21 L9.5 17 Z" fill="#2244cc"/><path d="M7 5 H18" stroke="#20a040" stroke-width="1.6"/><path d="M17 2.5 L21 5 L17 7.5 Z" fill="#20a040"/><circle cx="7" cy="5" r="2.2" fill="#f0d000" stroke="#d03000" stroke-width="0.8"/><text x="12" y="21" font-size="11" font-weight="bold" fill="#222" font-family="Liberation Sans">X</text></svg></div>
<div style="position:absolute;left:1251px;top:1099px;width:29px;height:24px;background:#cde4f7;"><svg width="29" height="24" viewBox="0 0 29 24" style="position:absolute;left:0;top:0"><path d="M7 7 V20" stroke="#2244cc" stroke-width="1.6"/><path d="M4.5 17 L7 21 L9.5 17 Z" fill="#2244cc"/><path d="M7 5 H18" stroke="#e05020" stroke-width="1.6"/><path d="M17 2.5 L21 5 L17 7.5 Z" fill="#e05020"/><circle cx="7" cy="5" r="2.2" fill="#20a040"/><text x="12" y="21" font-size="11" font-weight="bold" fill="#222" font-family="Liberation Sans">-Y</text></svg></div>
<div style="position:absolute;left:1284px;top:1099px;width:29px;height:24px;background:#cde4f7;"><svg width="29" height="24" viewBox="0 0 29 24" style="position:absolute;left:0;top:0"><path d="M7 7 V20" stroke="#20a040" stroke-width="1.6"/><path d="M4.5 17 L7 21 L9.5 17 Z" fill="#20a040"/><path d="M7 5 H18" stroke="#e05020" stroke-width="1.6"/><path d="M17 2.5 L21 5 L17 7.5 Z" fill="#e05020"/><circle cx="7" cy="5" r="2.2" fill="#f0d000" stroke="#2244cc" stroke-width="0.8"/><text x="13" y="21" font-size="11" font-weight="bold" fill="#222" font-family="Liberation Sans">Z</text></svg></div>
<div style="position:absolute;left:1317px;top:1099px;width:29px;height:24px;background:#cde4f7;"><svg width="29" height="24" viewBox="0 0 29 24" style="position:absolute;left:0;top:0"><path d="M7 18 V5" stroke="#20a040" stroke-width="1.6"/><path d="M4.5 7 L7 3 L9.5 7 Z" fill="#20a040"/><path d="M7 19 H19" stroke="#e05020" stroke-width="1.6"/><path d="M18 16.5 L22 19 L18 21.5 Z" fill="#e05020"/><circle cx="7" cy="19" r="2.3" fill="#2244cc"/><text x="10" y="13" font-size="11" font-weight="bold" fill="#222" font-family="Liberation Sans">-Z</text></svg></div>
<div style="position:absolute;left:1350px;top:1099px;width:43px;height:24px;background:#cde4f7;"><svg width="43" height="24" viewBox="0 0 43 24" style="position:absolute;left:0;top:0"><path d="M4 8 L9 5 L14 7 L14 12 L20 10 L24 12 L24 19 L18 22 L4 17 Z" fill="#5a82c0"/><path d="M4 8 L9 5 L14 7 L9 10 Z M14 12 L20 10 L24 12 L18 14 Z" fill="#9ab8e0"/><path d="M31 10 L38 10 L34.5 14 Z" fill="#111"/></svg></div>
<div style="position:absolute;left:1397px;top:1099px;width:42px;height:24px;background:#cde4f7;"><svg width="42" height="24" viewBox="0 0 42 24" style="position:absolute;left:0;top:0"><path d="M4 9 L10 5 L21 6 L21 18 L15 22 L4 21 Z" fill="#c8d0dc" stroke="#8a93a8" stroke-width="1"/><path d="M4 9 L15 10 L21 6 M15 10 V22" stroke="#8a93a8" stroke-width="1" fill="none"/><path d="M30 10 L37 10 L33.5 14 Z" fill="#111"/></svg></div>
<div style="position:absolute;left:1444px;top:1099px;width:43px;height:24px;background:#cde4f7;"><svg width="43" height="24" viewBox="0 0 43 24" style="position:absolute;left:0;top:0"><rect x="8" y="3" width="12" height="5" fill="#555"/><rect x="3" y="8" width="22" height="9" rx="1.5" fill="#555"/><rect x="7" y="14" width="14" height="8" fill="#fff" stroke="#555" stroke-width="1"/><path d="M9 17 H19 M9 19.5 H19" stroke="#777" stroke-width="0.8"/><path d="M31 10 L38 10 L34.5 14 Z" fill="#111"/></svg></div>
<div style="position:absolute;left:1500px;top:1099px;width:29px;height:24px;background:#cde4f7;"><svg width="29" height="24" viewBox="0 0 29 24" style="position:absolute;left:0;top:0"><circle cx="11" cy="12" r="5.5" fill="none" stroke="#555" stroke-width="2.2"/><path d="M15 16 L20 21" stroke="#555" stroke-width="2.8"/><path d="M13 4 L21 12 M21 4 L13 12" stroke="#f00000" stroke-width="2.6" stroke-linecap="round"/></svg></div>
<div style="position:absolute;left:1542px;top:1099px;width:29px;height:24px;background:#cde4f7;"><svg width="29" height="24" viewBox="0 0 29 24" style="position:absolute;left:0;top:0"><rect x="6" y="4" width="12" height="17" fill="#f0f0f0" stroke="#666" stroke-width="1.2"/><rect x="6" y="4" width="12" height="2" fill="#4a7ad8"/><path d="M20 9 L24 12.5 L20 16 Z" fill="#444"/></svg></div>
<div style="position:absolute;left:0px;top:0px;width:1px;height:1200px;background:#a9aab0;"></div>
<div style="position:absolute;left:0px;top:3px;width:1px;height:68px;background:#1f2d5a;"></div>
<div style="position:absolute;left:1599px;top:3px;width:1px;height:68px;background:#1f2d5a;"></div>
<div style="position:absolute;left:1599px;top:0px;width:1px;height:1200px;background:#a9aab0;"></div>
<div style="position:absolute;left:0px;top:1199px;width:1600px;height:1px;background:#a9aab0;"></div>
<svg style="position:absolute;left:0px;top:0px" width="40" height="40" viewBox="0 0 40 40"><path d="M11 14 L20 9 L29 13 L28 19 L20 23 L13 20 Z" fill="#4f7fc4" stroke="#3a4a6a" stroke-width="0.8"/><path d="M15 14 L20 11.5 L25 14 L20 17 Z" fill="#8fb4e4"/><path d="M21.5 15.5 Q17 14 14.5 18 Q12.5 21.5 13 24 Q13.5 27.5 17 27.5 Q21 27.5 21 23.5 Q21 20 17.5 20 Q14.5 20 13.5 22.5" fill="none" stroke="#3d3520" stroke-width="4.6" stroke-linecap="round"/><path d="M21.5 15.5 Q17 14 14.5 18 Q12.5 21.5 13 24 Q13.5 27.5 17 27.5 Q21 27.5 21 23.5 Q21 20 17.5 20 Q14.5 20 13.5 22.5" fill="none" stroke="#f4c81c" stroke-width="2.8" stroke-linecap="round"/></svg>
<div style="position:absolute;left:0px;top:0px;width:1600px;height:1px;background:#c4c4c4;"></div>
<div style="position:absolute;left:1447px;top:18px;width:11px;height:1px;background:#aaa;"></div>
<div style="position:absolute;left:1504px;top:12px;width:13px;height:13px;border:1.5px solid #222;"></div>
<svg style="position:absolute;left:1562px;top:12px" width="14" height="14"><path d="M1 1 L13 13 M13 1 L1 13" stroke="#222" stroke-width="1.4"/></svg>
<svg style="position:absolute;left:1582px;top:1184px" width="16" height="14"><g fill="#b8b8b8"><rect x="10" y="2" width="2" height="2"/><rect x="6" y="6" width="2" height="2"/><rect x="10" y="6" width="2" height="2"/><rect x="2" y="10" width="2" height="2"/><rect x="6" y="10" width="2" height="2"/><rect x="10" y="10" width="2" height="2"/></g></svg>
<div style="position:absolute;left:1260px;top:1161px;width:101px;height:26px;background:#fdfdfd;border:1px solid #1b6fd1;border-radius:4px;text-align:center;line-height:28px;">OK</div>
<div style="position:absolute;left:1373px;top:1161px;width:101px;height:26px;background:#fdfdfd;border:1px solid #cfcfcf;border-radius:4px;text-align:center;line-height:28px;">Cancel</div>
<div style="position:absolute;left:1486px;top:1161px;width:101px;height:26px;background:#fdfdfd;border:1px solid #cfcfcf;border-radius:4px;text-align:center;line-height:28px;">Apply</div>
</body></html>
